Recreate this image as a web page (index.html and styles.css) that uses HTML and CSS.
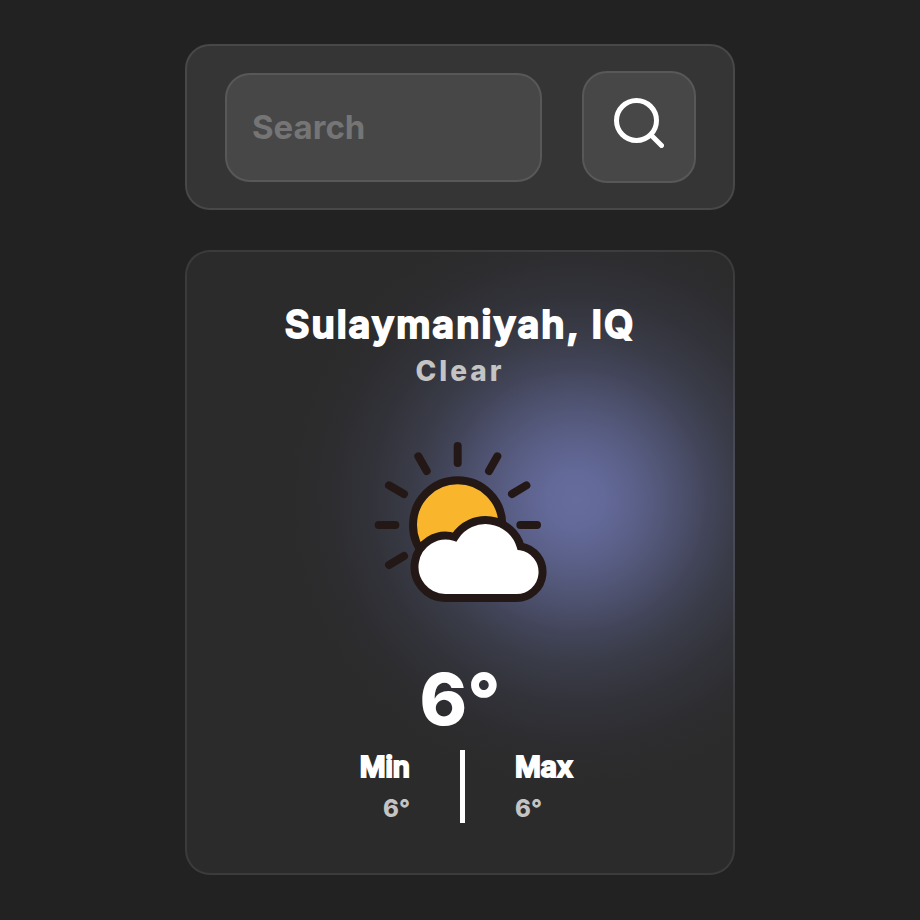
FILE: index.html
```html
<!DOCTYPE html>
<html lang="en">
<head>
<meta charset="utf-8">
<meta name="viewport" content="width=device-width, initial-scale=1">
<title>Weather</title>
<link rel="stylesheet" href="styles.css">
</head>
<body>
<main class="app">
  <form class="search">
    <input class="search-input" type="search" placeholder="Search" aria-label="Search">
    <button class="search-button" type="button" aria-label="Search">
      <svg class="search-icon" viewBox="0 0 50 50" aria-hidden="true">
        <circle cx="22.5" cy="22.5" r="20"/>
        <path d="M37 37 47.5 47.5"/>
      </svg>
    </button>
  </form>
  <section class="card">
    <h1 class="city">Sulaymaniyah, IQ</h1>
    <p class="condition">Clear</p>
    <svg class="weather-icon" viewBox="0 0 570 525" role="img" aria-label="Sun behind a cloud">
      <circle class="sun" cx="278" cy="270" r="134"/>
      <path class="rays" d="M278 33V84M160 64 185 108M397 64 372 108M72 151 117 177M484 151 441 177M41 270H91M466 270H516M72 390 117 363"/>
      <path class="cloud" d="M240 489A93.5 93.5 0 1 1 269 306A110 110 0 0 1 467 334A78 78 0 0 1 453 489Z"/>
    </svg>
    <p class="temperature">6°</p>
    <dl class="range">
      <div class="min"><dt>Min</dt><dd>6°</dd></div>
      <div class="divider"></div>
      <div class="max"><dt>Max</dt><dd>6°</dd></div>
    </dl>
  </section>
</main>
</body>
</html>
```
FILE: styles.css
```css
* {
  box-sizing: border-box;
}

body {
  margin: 0;
  background: #222;
  color: #fff;
  font-family: Inter, sans-serif;
}

.app {
  display: flex;
  flex-direction: column;
  gap: 40px;
  max-width: 550px;
  margin: 0 auto;
  padding: 44px 0;
}

.search {
  display: flex;
  align-items: center;
  gap: 40px;
  padding: 25px 37px 25px 38px;
  border: 2px solid #484848;
  border-radius: 25px;
  background: #353535;
}

.search-input {
  flex: 1;
  min-width: 0;
  padding: 32px 25px;
  border: 2px solid #585858;
  border-radius: 25px;
  background: #474747;
  color: #fff;
  font: 700 33px/41px Inter, sans-serif;
  appearance: none;
}

.search-input::placeholder {
  color: #757575;
}

.search-button {
  padding: 25px 30px 33px;
  border: 2px solid #585858;
  border-radius: 25px;
  background: #474747;
}

.search-icon {
  display: block;
  width: 50px;
  height: 50px;
  fill: none;
  stroke: #fff;
  stroke-width: 5;
  stroke-linecap: round;
}

.card {
  display: flex;
  flex-direction: column;
  align-items: center;
  padding: 48px 48px 50px;
  border: 2px solid rgb(255 255 255 / 8%);
  border-radius: 25px;
  background: radial-gradient(circle 290px at 71% 40%,
    #666c9c 0%, #636998 10%, #5b6089 21%, #4f5371 34%, #424559 46%,
    #393b47 57%, #32333a 70%, #2d2d30 85%, #2b2b2b 100%) border-box #2b2b2b;
}

.city,
.condition,
.temperature,
.range,
.range dd {
  margin: 0;
}

.city {
  font-size: 38px;
  font-weight: 600;
  line-height: 48px;
  letter-spacing: 2px;
  -webkit-text-stroke: 2px;
}

.condition {
  color: #c4c4c4;
  font-size: 28px;
  font-weight: 800;
  line-height: 46px;
  letter-spacing: 3px;
}

.weather-icon {
  width: 190px;
  height: 175px;
  margin: 41px 0 42px;
}

.sun {
  fill: #f9b62c;
}

.cloud {
  fill: #fff;
}

.sun,
.rays,
.cloud {
  stroke: #231815;
  stroke-width: 24;
  stroke-linecap: round;
}

.rays {
  fill: none;
}

.temperature {
  font-size: 72px;
  font-weight: 800;
  line-height: 94px;
}

.range {
  display: grid;
  grid-template-columns: 1fr 5px 1fr;
  gap: 50px;
  align-self: stretch;
  margin-top: 4px;
  padding-left: 5px;
}

.range dt {
  font-size: 28px;
  font-weight: 600;
  line-height: 34px;
  -webkit-text-stroke: 2px;
}

.range dd {
  margin-top: 10px;
  color: #c4c4c4;
  font-size: 24px;
  font-weight: 800;
  line-height: 29px;
}

.min {
  text-align: right;
}

.divider {
  background: #fff;
}
```
